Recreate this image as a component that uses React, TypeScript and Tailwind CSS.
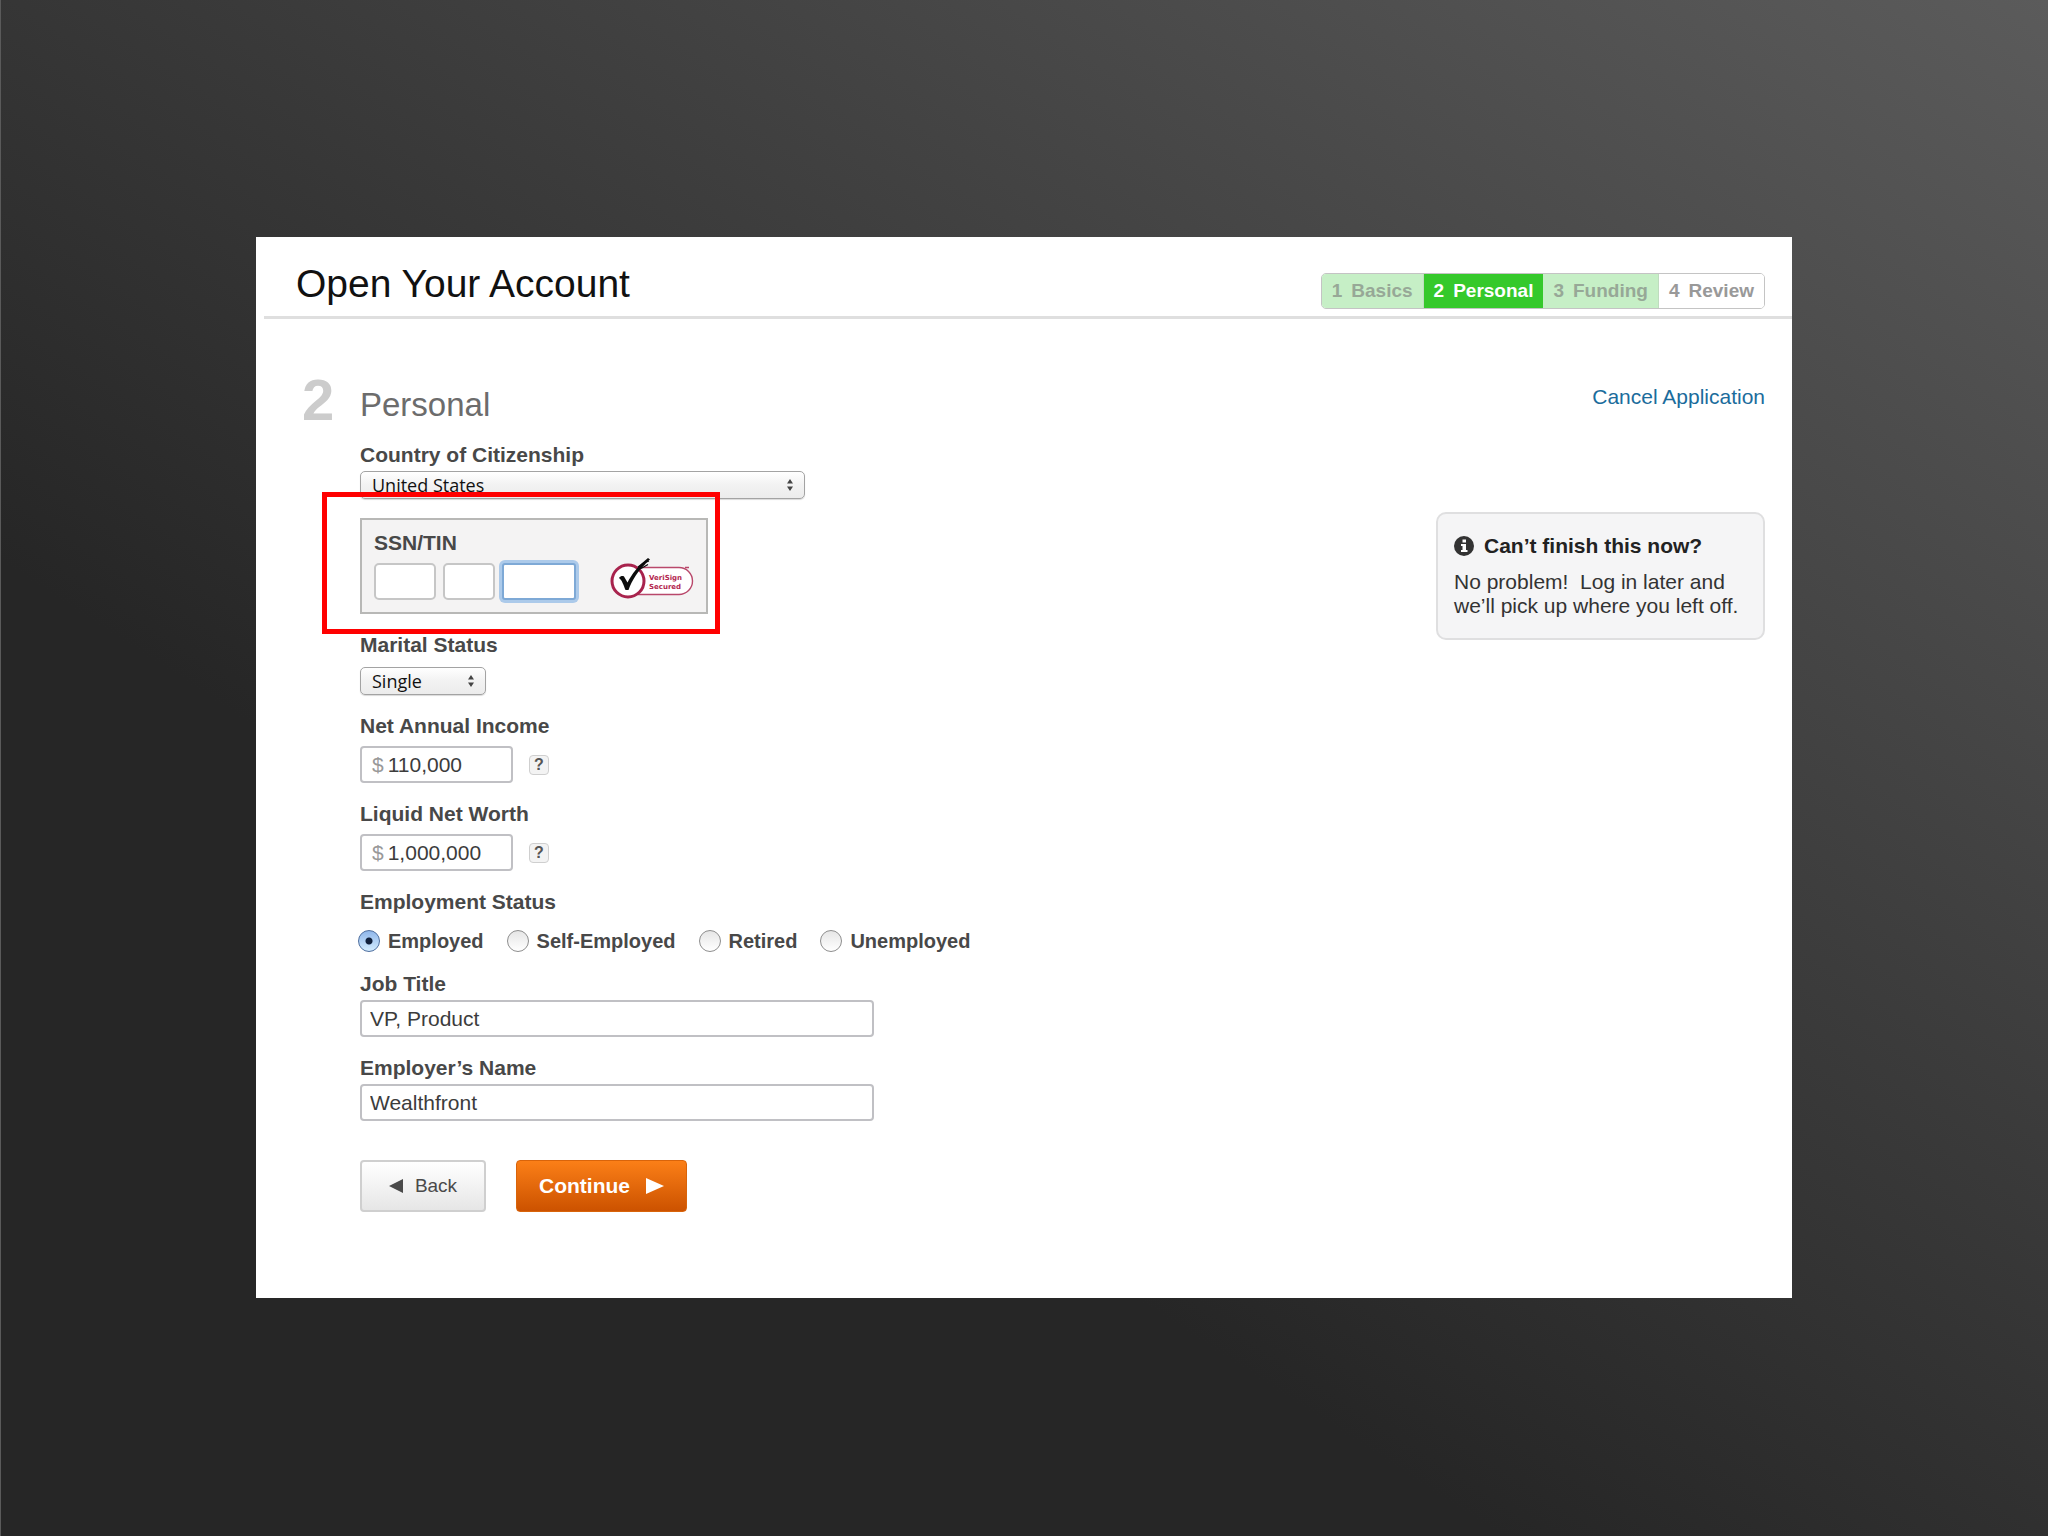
import { useState } from "react";
import type { InputHTMLAttributes, ReactNode, SelectHTMLAttributes } from "react";

const employmentOptions = ["Employed", "Self-Employed", "Retired", "Unemployed"];

const steps = [
  { name: "Basics", className: "border-r border-[#bfdcbf] bg-[#c6efc6] text-[#97a897]" },
  { name: "Personal", className: "bg-[#35c92b] text-white" },
  { name: "Funding", className: "border-r border-[#bfdcbf] bg-[#c6efc6] text-[#97a897]" },
  { name: "Review", className: "bg-white text-[#999999]" },
];

function Label({ htmlFor, className, children }: { htmlFor: string; className: string; children: ReactNode }) {
  return (
    <label htmlFor={htmlFor} className={`block w-fit text-[21px] leading-6 font-bold text-[#484848] ${className}`}>
      {children}
    </label>
  );
}

function Select({ className, children, ...props }: SelectHTMLAttributes<HTMLSelectElement>) {
  return (
    <div className={`relative max-w-full ${className}`}>
      <select
        {...props}
        className="block h-7 w-full appearance-none rounded-[5px] border border-[#a3a3a3] bg-linear-to-b from-white via-[#f2f2f2] to-[#ececec] pr-8 pl-[11px] font-['Open_Sans','Noto_Sans',sans-serif] text-[18px] leading-6 text-[#111111] shadow-[0_1px_1px_rgba(0,0,0,0.15)]"
      >
        {children}
      </select>
      <svg className="pointer-events-none absolute top-2 right-[11px] h-3 w-2" viewBox="0 0 8 12" fill="#444444" aria-hidden="true">
        <path d="M4 0 7 4.5H1zM4 12 1 7.5h6z" />
      </svg>
    </div>
  );
}

function MoneyInput({ id, defaultValue }: { id: string; defaultValue: string }) {
  return (
    <div className="flex items-center gap-4">
      <div className="flex h-[37px] w-[153px] items-center gap-1 rounded-[4px] border-2 border-[#c0c0c4] bg-white pl-[10px] text-[21px]">
        <span className="text-[#999999]">$</span>
        <input id={id} defaultValue={defaultValue} className="w-full min-w-0 bg-transparent text-[#3c3c3c] outline-none" />
      </div>
      <button
        type="button"
        aria-label="Help"
        className="flex h-5 w-5 items-center justify-center rounded-[4px] border border-[#cfcfcf] bg-[#f3f3f3] text-[16px] leading-4 font-bold text-[#555555]"
      >
        ?
      </button>
    </div>
  );
}

function TextInput(props: InputHTMLAttributes<HTMLInputElement>) {
  return (
    <input
      {...props}
      className="block h-[37px] w-[514px] max-w-full rounded-[4px] border-2 border-[#c0c0c4] bg-white px-2 text-[21px] text-[#3c3c3c] outline-none"
    />
  );
}

function VerisignSeal() {
  return (
    <svg className="h-[42px] w-[84px]" viewBox="0 0 84 42" role="img" aria-label="VeriSign Secured">
      <path d="M28 9.500H69a13.500 13.500 0 0 1 0 27H28" fill="#ffffff" stroke="#b9486b" strokeWidth="1.400" />
      <circle cx="18" cy="23" r="16" fill="#ffffff" stroke="#a8234d" strokeWidth="3" />
      <path d="M9 20c1.500-2 3.500-2.500 5-1.500l3.500 6C22 16 28 8 38 0l2 1.500c-2 2-4 3-5 5C29 12 22 22 18.500 32h-3C13.500 27 12 22 9 20z" fill="#0c0c0c" />
      <path d="M28 9l6-4.500M31 10.500l7-4M34 5l5-2" stroke="#0c0c0c" strokeWidth="1.200" />
      <text x="39" y="22" fontSize="7" fontWeight="bold" fill="#b31f4e" fontFamily="DejaVu Sans, sans-serif">VeriSign</text>
      <text x="39" y="31" fontSize="7" fontWeight="bold" fill="#b31f4e" fontFamily="DejaVu Sans, sans-serif">Secured</text>
      <path d="M75 9.500h4" stroke="#b9486b" strokeWidth="1.500" />
    </svg>
  );
}

export default function App() {
  const [employment, setEmployment] = useState("Employed");

  return (
    <div className="min-h-screen bg-[linear-gradient(33deg,#262626_34%,#5b5b5b_100%)] pt-[237px] pb-[237px] font-['Liberation_Sans',Arial,sans-serif] shadow-[inset_1px_0_0_#5a5a5a]">
      <div className="mx-auto w-3/4 bg-white pb-[86px]">
        <header className="ml-2 flex h-[82px] items-end justify-between border-b-[3px] border-[#dfdfdf] pr-[27px] pb-[7px] pl-8">
          <h1 className="text-[39px] leading-[50px] text-[#111111]">Open Your Account</h1>
          <ol className="flex h-9 overflow-hidden rounded-[5px] border border-[#c4c4c4] text-[19px] font-bold">
            {steps.map((step, i) => (
              <li key={step.name} className={`flex items-center gap-[9px] px-[10px] ${step.className}`}>
                <span>{i + 1}</span>
                <span>{step.name}</span>
              </li>
            ))}
          </ol>
        </header>

        <main className="flex pt-[66px] pr-[27px] pl-[46px]">
          <div className="w-[58px] shrink-0 text-[58px] leading-[30px] font-bold text-[#cccccc]">2</div>

          <form className="min-w-0 flex-1" onSubmit={(e) => e.preventDefault()}>
            <h2 className="mb-[18px] text-[33px] leading-10 text-[#6c6c6c]">Personal</h2>

            <div className="flex flex-col gap-[19px]">
              <div>
                <Label htmlFor="country" className="mb-1">Country of Citizenship</Label>
                <Select id="country" className="w-[445px]">
                  <option>United States</option>
                </Select>
              </div>

              {/* SSN panel with the highlight frame around it */}
              <div className="relative flex h-24 w-[348px] items-end justify-between border-2 border-[#b8b8b6] bg-[#f4f3f3] pr-3 pb-3 pl-3">
                <div className="pointer-events-none absolute -top-7 -right-[14px] -bottom-[22px] -left-10 border-[5px] border-[#ff0000]" />
                <fieldset>
                  <legend className="mb-2 text-[21px] leading-6 font-bold text-[#484848]">SSN/TIN</legend>
                  <div className="flex gap-[7px]">
                    <input aria-label="SSN first three digits" className="h-[37px] w-[62px] rounded-[5px] border-2 border-[#c6c6c6] bg-white px-2 text-[21px] outline-none" />
                    <input aria-label="SSN middle two digits" className="h-[37px] w-[52px] rounded-[5px] border-2 border-[#c6c6c6] bg-white px-2 text-[21px] outline-none" />
                    <input aria-label="SSN last four digits" className="h-[37px] w-[74px] rounded-[3px] border-2 border-[#7ea9d6] bg-white px-2 text-[21px] ring-3 ring-[#8db8e6]/70 outline-none" />
                  </div>
                </fieldset>
                <VerisignSeal />
              </div>

              <div>
                <Label htmlFor="marital" className="mb-[10px]">Marital Status</Label>
                <Select id="marital" className="w-[126px]">
                  <option>Single</option>
                </Select>
              </div>

              <div>
                <Label htmlFor="income" className="mb-2">Net Annual Income</Label>
                <MoneyInput id="income" defaultValue="110,000" />
              </div>

              <div>
                <Label htmlFor="worth" className="mb-2">Liquid Net Worth</Label>
                <MoneyInput id="worth" defaultValue="1,000,000" />
              </div>

              <fieldset>
                <legend className="mb-[15px] text-[21px] leading-6 font-bold text-[#484848]">Employment Status</legend>
                <div className="-ml-0.5 flex gap-[23px]">
                  {employmentOptions.map((option) => (
                    <label key={option} className="flex items-center gap-2 text-[20px] leading-6 font-bold text-[#484848]">
                      <input
                        type="radio"
                        name="employment"
                        value={option}
                        checked={employment === option}
                        onChange={() => setEmployment(option)}
                        className="h-[22px] w-[22px] appearance-none rounded-full border border-[#8e8e8e] bg-linear-to-b from-[#e6e6e6] to-white checked:border-[#4f6f9f] checked:bg-[radial-gradient(circle,#10203c_0_3px,transparent_4px),linear-gradient(#8fb6ea,#d3ecff)]"
                      />
                      {option}
                    </label>
                  ))}
                </div>
              </fieldset>

              <div>
                <Label htmlFor="job" className="mb-1">Job Title</Label>
                <TextInput id="job" defaultValue="VP, Product" />
              </div>

              <div>
                <Label htmlFor="employer" className="mb-1">Employer’s Name</Label>
                <TextInput id="employer" defaultValue="Wealthfront" />
              </div>
            </div>

            <div className="mt-[39px] flex gap-[30px]">
              <button
                type="button"
                className="flex h-[52px] w-[126px] items-center justify-center gap-3 rounded-[4px] border-2 border-[#cfcfcf] bg-linear-to-b from-white to-[#e6e6e6] text-[19px] text-[#4a4a4a]"
              >
                <svg className="h-[14px] w-[14px]" viewBox="0 0 14 14" fill="#4a4a4a" aria-hidden="true">
                  <path d="M14 0v14L0 7z" />
                </svg>
                Back
              </button>
              <button
                type="submit"
                className="flex h-[52px] w-[171px] items-center justify-center gap-4 rounded-[4px] border border-[#d9640a] bg-linear-to-b from-[#fb7f17] to-[#cc5200] text-[21px] font-bold text-white"
              >
                Continue
                <svg className="h-4 w-[18px]" viewBox="0 0 18 16" fill="#ffffff" aria-hidden="true">
                  <path d="M0 0v16l18-8z" />
                </svg>
              </button>
            </div>
          </form>

          <aside className="flex w-[329px] shrink-0 flex-col">
            <a href="#" className="self-end text-[21px] leading-6 text-[#1b6c9c]">Cancel Application</a>
            <div className="mt-[103px] rounded-[10px] border-2 border-[#dfdfe0] bg-[#f5f5f6] px-4 py-5 text-[21px] leading-6 text-[#333333]">
              <h3 className="mb-3 flex items-center gap-[10px] font-bold text-[#222222]">
                <svg className="h-5 w-5" viewBox="0 0 20 20" aria-hidden="true">
                  <circle cx="10" cy="10" r="10" fill="#333333" />
                  <path d="M8.500 3.500h3.500v3H8.500zM7 8h5v6h1.500v2h-6.500v-2h1.500v-4H7z" fill="#ffffff" />
                </svg>
                Can’t finish this now?
              </h3>
              <p>No problem!&nbsp; Log in later and<br />we’ll pick up where you left off.</p>
            </div>
          </aside>
        </main>
      </div>
    </div>
  );
}
